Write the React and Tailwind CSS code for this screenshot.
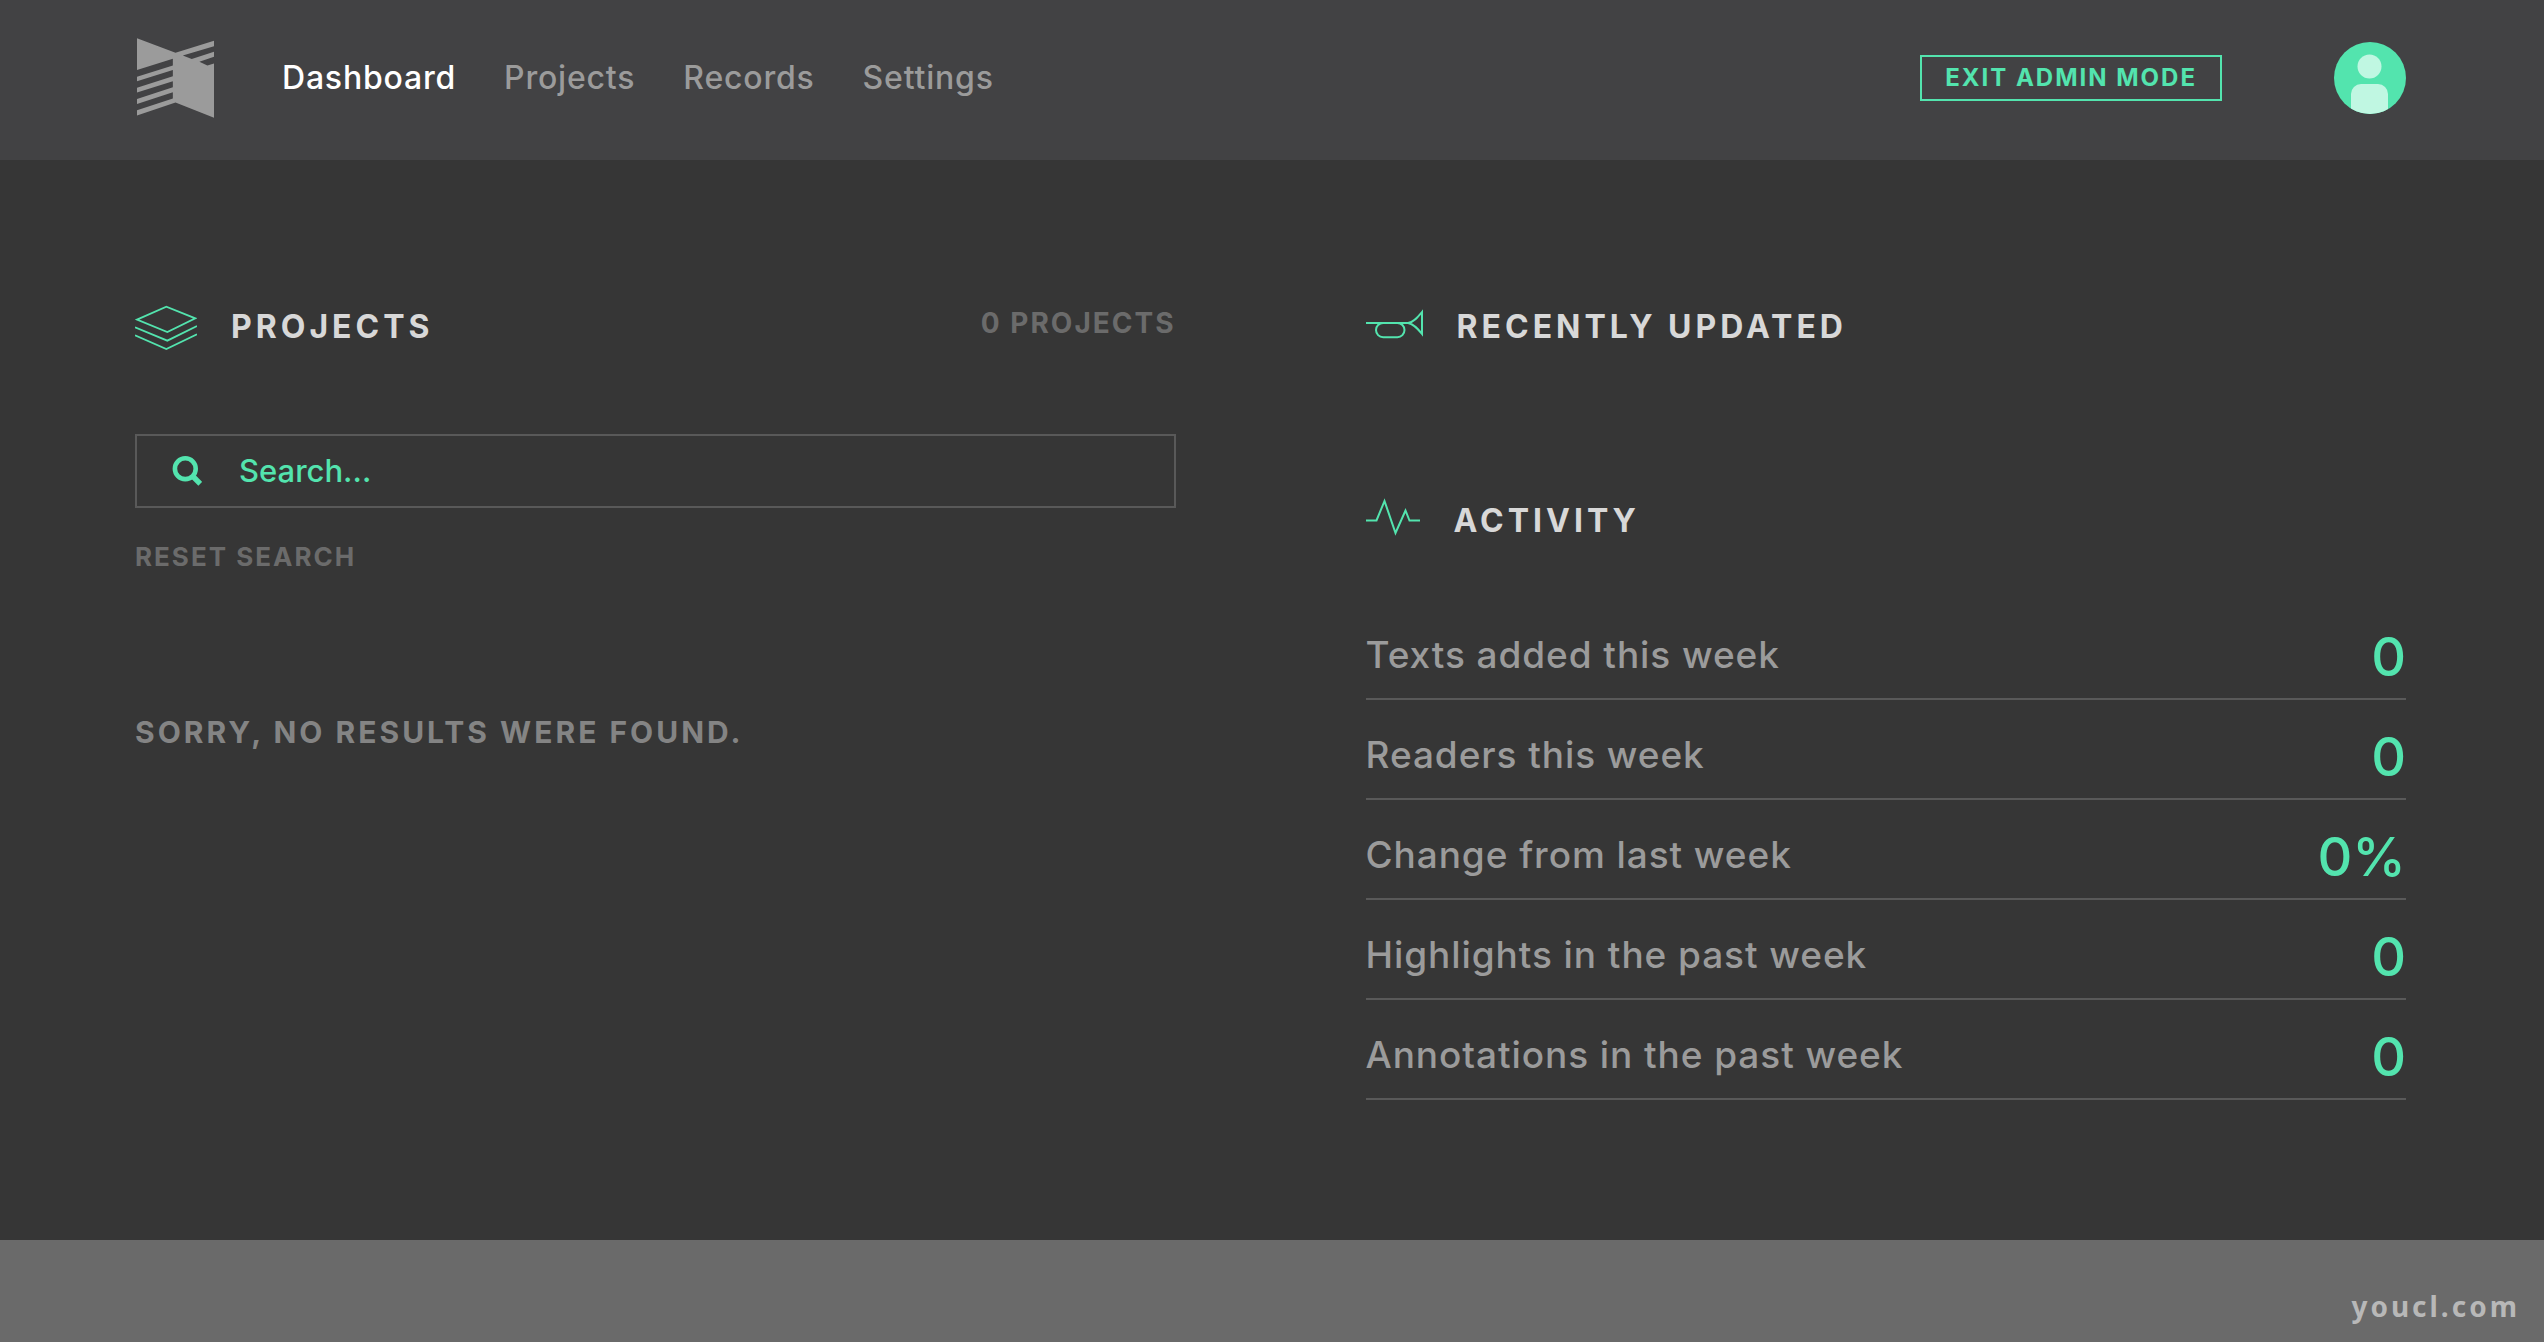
import React, { useState } from 'react';

const NAV_ITEMS = ['Dashboard', 'Projects', 'Records', 'Settings'];

const STATS = [
  { label: 'Texts added this week', value: '0' },
  { label: 'Readers this week', value: '0' },
  { label: 'Change from last week', value: '0%' },
  { label: 'Highlights in the past week', value: '0' },
  { label: 'Annotations in the past week', value: '0' },
];

export default function App() {
  return (
    <div className="min-h-screen flex flex-col bg-[#363636] font-['Inter',sans-serif]">
      <Header />
      <main className="grid grid-cols-2 gap-[190px] pl-[135px] pr-[138px] pt-[143px] pb-35">
        <ProjectsPanel />
        <div>
          <SectionHeading icon={<TrumpetIcon />} title="Recently Updated" />
          <ActivityPanel />
        </div>
      </main>
      <footer className="flex-1 flex items-end justify-end bg-[#6a6a6a] pt-12 pb-5 pr-6">
        <span className="font-['Noto_Sans',sans-serif] text-[28px] leading-9 font-bold tracking-[3px] text-[#b8b8b8]">
          youcl.com
        </span>
      </footer>
    </div>
  );
}

function Header() {
  return (
    <header className="h-40 flex items-center bg-[#424244] pl-[137px] pr-[138px] pb-1">
      <a href="#home" aria-label="Home">
        <Logo />
      </a>
      <nav className="flex gap-12 ml-17">
        {NAV_ITEMS.map((item, i) => (
          <a
            key={item}
            href={`#${item.toLowerCase()}`}
            className={`text-[32px] leading-10 font-medium tracking-wide ${i === 0 ? 'text-white' : 'text-[#9b9b9b]'}`}
          >
            {item}
          </a>
        ))}
      </nav>
      <button className="ml-auto mr-28 h-[46px] px-[23px] border-2 border-[#53e4ae] text-[#53e4ae] text-2xl leading-8 font-bold tracking-[2px] uppercase whitespace-nowrap">
        Exit Admin Mode
      </button>
      <button aria-label="Account" className="rounded-full">
        <Avatar />
      </button>
    </header>
  );
}

function ProjectsPanel() {
  const [query, setQuery] = useState('');

  return (
    <section>
      <div className="flex items-start justify-between">
        <SectionHeading icon={<LayersIcon />} title="Projects" />
        <p className="text-[28px] leading-10 font-bold tracking-[2px] uppercase text-[#6b6b6b]">0 Projects</p>
      </div>

      {/* Search */}
      <label className="mt-[83px] h-[74px] flex items-center gap-[37px] border-2 border-[#595959] pl-[35px] pr-6">
        <SearchIcon />
        <input
          type="text"
          aria-label="Search projects"
          value={query}
          onChange={(e) => setQuery(e.target.value)}
          placeholder="Search..."
          className="flex-1 text-[31px] leading-10 font-medium text-[#53e4ae] placeholder:text-[#53e4ae] outline-none"
        />
      </label>
      <button
        onClick={() => setQuery('')}
        className="mt-[33px] block text-[26px] leading-8 font-bold tracking-[2px] uppercase text-[#6b6b6b]"
      >
        Reset Search
      </button>

      <p className="mt-[139px] text-[30px] leading-10 font-bold tracking-[3px] uppercase text-[#848484]">
        Sorry, no results were found.
      </p>
    </section>
  );
}

function ActivityPanel() {
  return (
    <section className="mt-[146px]">
      <SectionHeading icon={<PulseIcon />} title="Activity" />
      <dl className="mt-[55px]">
        {STATS.map((stat) => (
          <div key={stat.label} className="h-25 flex items-center justify-between border-b-2 border-[#595959] pt-4">
            <dt className="pb-1 text-[37px] leading-12 font-medium tracking-wide text-[#9b9b9b]">{stat.label}</dt>
            <dd className="text-[54px] leading-14 font-medium text-[#53e4ae]">{stat.value}</dd>
          </div>
        ))}
      </dl>
    </section>
  );
}

function SectionHeading({ icon, title }) {
  return (
    <div className="flex items-center gap-[34px]">
      {icon}
      <h2 className="text-[32px] leading-12 font-bold tracking-[4px] uppercase text-[#d8d8d8]">{title}</h2>
    </div>
  );
}

function Logo() {
  return (
    <svg className="w-[77px] h-20" viewBox="80 54 232 240" fill="#9b9b9b">
      <path d="M80 54L196 98L312 62V78L218 106L245 117L312 95V110L268 125L292 136L312 130V294L196 248L80 287V271L188 236V217L80 252V237L188 202V184L80 218V203L188 169V150L80 184V170L188 136V116L80 150Z" />
    </svg>
  );
}

function Avatar() {
  return (
    <svg className="size-[72px]" viewBox="0 0 72 72">
      <clipPath id="avatar-clip">
        <circle cx="36" cy="36" r="36" />
      </clipPath>
      <g clipPath="url(#avatar-clip)">
        <rect width="72" height="72" fill="#53e4ae" />
        <circle cx="35.5" cy="24.5" r="12" fill="#c0f7e2" />
        <rect x="17" y="42" width="37" height="44" rx="10" fill="#c0f7e2" />
      </g>
    </svg>
  );
}

function LayersIcon() {
  return (
    <svg className="w-[62px] h-12" viewBox="75 69 186 144" fill="none" stroke="#53e4ae" strokeWidth="5.5">
      <path d="M81 119L169 80L256 115L172 156Z" />
      <path d="M75 142L172 182L261 138" />
      <path d="M75 166L169 207L261 163" />
    </svg>
  );
}

function TrumpetIcon() {
  return (
    <svg className="w-[57px] h-12" viewBox="0 0 57 48" fill="none" stroke="#53e4ae" strokeWidth="2">
      <path d="M0 20H42C48 19 52 14 56 9V31C52 26 48 21 42 20" />
      <rect x="10" y="20" width="28.5" height="14.2" rx="7.1" />
    </svg>
  );
}

function PulseIcon() {
  return (
    <svg className="w-[54px] h-12" viewBox="0 0 54 48" fill="none" stroke="#53e4ae" strokeWidth="2">
      <path d="M0 23.5H10.5L18.5 4L29.5 36L39.5 13.5L43.5 23.5H54" />
    </svg>
  );
}

function SearchIcon() {
  return (
    <svg className="size-[30px]" viewBox="0 0 30 30" fill="none" stroke="#53e4ae">
      <circle cx="13.3" cy="12.7" r="10.4" strokeWidth="4.6" />
      <path d="M20.5 20L28.3 27.8" strokeWidth="5.4" />
    </svg>
  );
}
